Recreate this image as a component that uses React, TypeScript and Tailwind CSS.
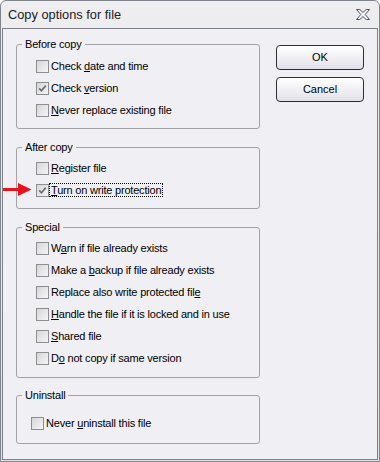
import type { ReactNode } from "react";

type Opt = {
  label: ReactNode;
  checked?: boolean;
  focused?: boolean;
};

const U = ({ children }: { children: ReactNode }) => (
  <span className="underline underline-offset-[1px]">{children}</span>
);

const CheckBox = ({ checked }: { checked?: boolean }) => (
  <span className="flex h-[13px] w-[13px] shrink-0 items-center justify-center border border-[#8d8e90] bg-linear-to-br from-[#d6d6d8] to-[#f6f6f7]">
    {checked && (
      <svg width="9" height="9" viewBox="0 0 9 9">
        <path
          d="M1.2 4.4 L3.4 6.8 L7.8 1.6"
          stroke="#6e6f72"
          strokeWidth="1.7"
          fill="none"
        />
      </svg>
    )}
  </span>
);

const Row = ({ opt }: { opt: Opt }) => (
  <div className="flex h-[22px] items-center">
    <CheckBox checked={opt.checked} />
    <span
      className={
        opt.focused
          ? "border border-dotted border-black px-[1px] leading-[12px]"
          : "border border-transparent px-[1px] leading-[12px]"
      }
    >
      {opt.label}
    </span>
  </div>
);

const Group = ({
  title,
  opts,
  className,
  inner,
}: {
  title: string;
  opts: Opt[];
  className: string;
  inner: string;
}) => (
  <fieldset
    className={`w-[244px] rounded-[3px] border border-[#a3a3a6] ${className}`}
  >
    <legend className="ml-[5px] px-[3px] text-[11px] leading-[13px] tracking-[-0.2px]">
      {title}
    </legend>
    <div className={inner}>
      {opts.map((o, i) => (
        <Row key={i} opt={o} />
      ))}
    </div>
  </fieldset>
);

const DlgButton = ({ children }: { children: ReactNode }) => (
  <button
    type="button"
    className="flex h-[25px] w-[88px] items-center justify-center rounded-[4px] border border-[#2e2e30] bg-linear-to-b from-white to-[#e2e1ea] text-[11px] leading-none text-black"
  >
    {children}
  </button>
);

export default function App() {
  return (
    <div
      className="relative h-[462px] w-[380px] bg-white text-black"
      style={{ fontFamily: '"Liberation Sans", Arial, sans-serif' }}
    >
      <div className="flex h-full flex-col rounded-t-[6px] border border-[#80858d] bg-linear-to-b from-[#eeeef1] to-[#e3e3e7] px-[1px] pb-[1px]">
        {/* Title bar */}
        <div className="flex h-[27px] shrink-0 items-center justify-between pl-[6px] pr-[8px]">
          <span className="text-[12.8px] text-[#1b1b22]">
            Copy options for file
          </span>
          <svg width="14" height="11" viewBox="0 0 14 11" className="mb-[1px]">
            <path
              d="M0.5 0.5 H3.8 L7 3.4 L10.2 0.5 H13.5 L9.2 5.5 L13.5 10.5 H10.2 L7 7.6 L3.8 10.5 H0.5 L4.8 5.5 Z"
              fill="#f5f5f8"
              stroke="#4c5262"
              strokeWidth="1"
              strokeLinejoin="round"
            />
          </svg>
        </div>

        {/* Client */}
        <div className="flex flex-1 border border-[#7d828a] bg-[#f0eff4] pl-[13px]">
          <div className="flex flex-col pt-[9px] text-[11px] tracking-[-0.2px]">
            <Group
              title="Before copy"
              className="pb-[7px] pt-[4px]"
              inner="pl-[19px]"
              opts={[
                {
                  label: (
                    <>
                      Check <U>d</U>ate and time
                    </>
                  ),
                },
                {
                  label: (
                    <>
                      Check <U>v</U>ersion
                    </>
                  ),
                  checked: true,
                },
                {
                  label: (
                    <>
                      <U>N</U>ever replace existing file
                    </>
                  ),
                },
              ]}
            />
            <Group
              title="After copy"
              className="mt-[12px] pb-[7px] pt-[3px]"
              inner="pl-[19px]"
              opts={[
                {
                  label: (
                    <>
                      <U>R</U>egister file
                    </>
                  ),
                },
                {
                  label: (
                    <>
                      <U>T</U>urn on write protection
                    </>
                  ),
                  checked: true,
                  focused: true,
                },
              ]}
            />
            <Group
              title="Special"
              className="mt-[12px] pb-[8px] pt-[3px]"
              inner="pl-[19px]"
              opts={[
                {
                  label: (
                    <>
                      W<U>a</U>rn if file already exists
                    </>
                  ),
                },
                {
                  label: (
                    <>
                      Make a <U>b</U>ackup if file already exists
                    </>
                  ),
                },
                {
                  label: (
                    <>
                      Replace also write protected fil<U>e</U>
                    </>
                  ),
                },
                {
                  label: (
                    <>
                      <U>H</U>andle the file if it is locked and in use
                    </>
                  ),
                },
                {
                  label: (
                    <>
                      <U>S</U>hared file
                    </>
                  ),
                },
                {
                  label: (
                    <>
                      D<U>o</U> not copy if same version
                    </>
                  ),
                },
              ]}
            />
            <Group
              title="Uninstall"
              className="mt-[11px] pb-[9px] pt-[10px]"
              inner="pl-[14px]"
              opts={[
                {
                  label: (
                    <>
                      Never <U>u</U>ninstall this file
                    </>
                  ),
                },
              ]}
            />
          </div>

          <div className="ml-[16px] flex flex-col gap-[7px] pt-[16px]">
            <DlgButton>OK</DlgButton>
            <DlgButton>Cancel</DlgButton>
          </div>
        </div>
      </div>

      {/* Red annotation arrow */}
      <svg
        className="pointer-events-none absolute left-0 top-[182px]"
        width="34"
        height="16"
        viewBox="0 0 34 16"
      >
        <rect x="3" y="6" width="16" height="3" fill="#e8131b" />
        <polygon points="18,1 31.5,7.5 18,14" fill="#e8131b" />
      </svg>
    </div>
  );
}
